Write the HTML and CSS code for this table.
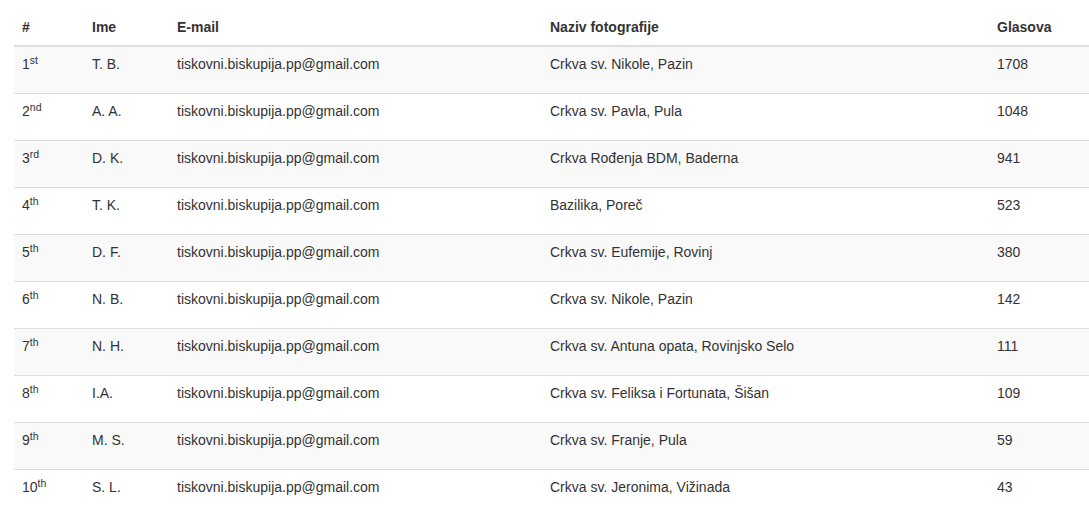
FILE: index.html
```html
<!DOCTYPE html>
<html>
<head>
<meta charset="utf-8">
<link rel="stylesheet" href="styles.css">
</head>
<body>
<div class="wrap">
<table class="results">
<thead>
<tr><th class="c-rank">#</th><th class="c-name">Ime</th><th class="c-mail">E-mail</th><th class="c-photo">Naziv fotografije</th><th class="c-votes">Glasova</th></tr>
</thead>
<tbody>
<tr><td>1<sup>st</sup></td><td>T. B.</td><td>tiskovni.biskupija.pp@gmail.com</td><td>Crkva sv. Nikole, Pazin</td><td>1708</td></tr>
<tr><td>2<sup>nd</sup></td><td>A. A.</td><td>tiskovni.biskupija.pp@gmail.com</td><td>Crkva sv. Pavla, Pula</td><td>1048</td></tr>
<tr><td>3<sup>rd</sup></td><td>D. K.</td><td>tiskovni.biskupija.pp@gmail.com</td><td>Crkva Rođenja BDM, Baderna</td><td>941</td></tr>
<tr><td>4<sup>th</sup></td><td>T. K.</td><td>tiskovni.biskupija.pp@gmail.com</td><td>Bazilika, Poreč</td><td>523</td></tr>
<tr><td>5<sup>th</sup></td><td>D. F.</td><td>tiskovni.biskupija.pp@gmail.com</td><td>Crkva sv. Eufemije, Rovinj</td><td>380</td></tr>
<tr><td>6<sup>th</sup></td><td>N. B.</td><td>tiskovni.biskupija.pp@gmail.com</td><td>Crkva sv. Nikole, Pazin</td><td>142</td></tr>
<tr><td>7<sup>th</sup></td><td>N. H.</td><td>tiskovni.biskupija.pp@gmail.com</td><td>Crkva sv. Antuna opata, Rovinjsko Selo</td><td>111</td></tr>
<tr><td>8<sup>th</sup></td><td>I.A.</td><td>tiskovni.biskupija.pp@gmail.com</td><td>Crkva sv. Feliksa i Fortunata, Šišan</td><td>109</td></tr>
<tr><td>9<sup>th</sup></td><td>M. S.</td><td>tiskovni.biskupija.pp@gmail.com</td><td>Crkva sv. Franje, Pula</td><td>59</td></tr>
<tr><td>10<sup>th</sup></td><td>S. L.</td><td>tiskovni.biskupija.pp@gmail.com</td><td>Crkva sv. Jeronima, Vižinada</td><td>43</td></tr>
</tbody>
</table>
</div>
</body>
</html>
```

FILE: styles.css
```css
html, body {
  margin: 0;
  padding: 0;
  background: #fff;
}
body {
  font-family: "Liberation Sans", Arial, Helvetica, sans-serif;
  font-size: 14px;
  line-height: 20px;
  color: #333;
  overflow: hidden;
}
.wrap {
  padding: 9px 0 0 14px;
}
.results {
  width: 1075px;
  border-collapse: separate;
  border-spacing: 0;
  table-layout: fixed;
}
.results th {
  text-align: left;
  font-weight: bold;
  padding: 8px;
  border-bottom: 2px solid #ddd;
  vertical-align: bottom;
}
.c-rank { width: 54px; }
.c-name { width: 69px; }
.c-mail { width: 357px; }
.c-photo { width: 431px; }
.results td {
  padding: 7px 8px 19px;
  border-top: 1px solid #ddd;
  vertical-align: top;
}
.results tbody tr:first-child td {
  border-top: 0;
}
.results tbody tr:nth-child(odd) td {
  background: #f9f9f9;
}
.results sup {
  font-size: 75%;
  line-height: 0;
  position: relative;
  top: -0.5em;
  vertical-align: baseline;
}
```
